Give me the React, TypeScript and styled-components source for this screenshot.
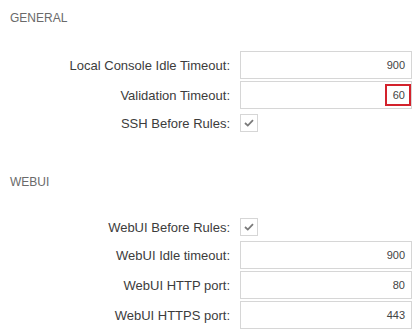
import {Fragment} from 'react'
import styled, {createGlobalStyle} from 'styled-components'

const GlobalStyle = createGlobalStyle`
	body {
		margin: 0;
		background: #fff;
		font-family: 'Liberation Sans', Arial, sans-serif;
		color: #333;
	}
`

const Page = styled.div`
	width: 417px;
	padding: 10px 0 0 10px;
	box-sizing: border-box;
`

const Section = styled.section`
	& + & {
		margin-top: 39px;
	}
`

const Heading = styled.h3`
	margin: 0;
	font-size: 12px;
	line-height: 16px;
	font-weight: normal;
	color: #6a6a6a;
`

const Form = styled.div`
	display: grid;
	grid-template-columns: 220px 172px;
	column-gap: 10px;
	row-gap: 2px;
	margin-top: 25px;
`

const Label = styled.label`
	display: flex;
	align-items: center;
	justify-content: flex-end;
	font-size: 13px;
	color: #3c3c3c;
	height: ${({$check}: {$check?: boolean}) => ($check ? '24px' : '28px')};
`

const Field = styled.div`
	height: 28px;
	box-sizing: border-box;
	border: 1px solid #d6d6d6;
	display: flex;
	align-items: center;
	justify-content: flex-end;
	padding-right: 6px;
	font-size: 11px;
	color: #444;
`

const InvalidValue = styled.span`
	margin-right: -6px;
	height: 22px;
	width: 26px;
	box-sizing: border-box;
	border: 2px solid #d3222c;
	display: flex;
	align-items: center;
	justify-content: flex-end;
	padding-right: 4px;
`

const CheckCell = styled.div`
	height: 24px;
	display: flex;
	align-items: center;
`

const Box = styled.span`
	width: 18px;
	height: 18px;
	box-sizing: border-box;
	border: 1px solid #d6d6d6;
	display: flex;
	align-items: center;
	justify-content: center;
`

type Row = {label: string; value?: string; check?: boolean; invalid?: boolean}

const general: Row[] = [
	{label: 'Local Console Idle Timeout:', value: '900'},
	{label: 'Validation Timeout:', value: '60', invalid: true},
	{label: 'SSH Before Rules:', check: true},
]

const webui: Row[] = [
	{label: 'WebUI Before Rules:', check: true},
	{label: 'WebUI Idle timeout:', value: '900'},
	{label: 'WebUI HTTP port:', value: '80'},
	{label: 'WebUI HTTPS port:', value: '443'},
]

function Check() {
	return (
		<Box>
			<svg width="10" height="8" viewBox="0 0 10 8">
				<path d="M1 4 L3.8 6.6 L9 1.2" fill="none" stroke="#7a7a7a" strokeWidth="1.8" />
			</svg>
		</Box>
	)
}

function Rows({rows}: {rows: Row[]}) {
	return (
		<Form>
			{rows.map((row) => (
				<Fragment key={row.label}>
					<Label $check={row.check}>{row.label}</Label>
					{row.check ? (
						<CheckCell>
							<Check />
						</CheckCell>
					) : (
						<Field>
							{row.invalid ? <InvalidValue>{row.value}</InvalidValue> : row.value}
						</Field>
					)}
				</Fragment>
			))}
		</Form>
	)
}

export default function App() {
	return (
		<>
			<GlobalStyle />
			<Page>
				<Section>
					<Heading>GENERAL</Heading>
					<Rows rows={general} />
				</Section>
				<Section>
					<Heading>WEBUI</Heading>
					<Rows rows={webui} />
				</Section>
			</Page>
		</>
	)
}
